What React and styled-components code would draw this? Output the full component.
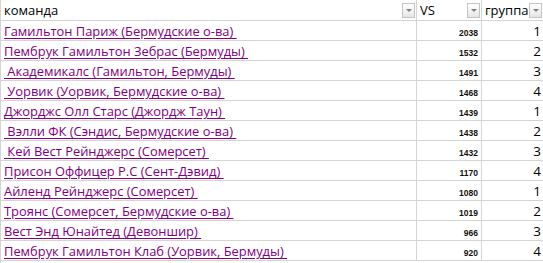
import React from "react";
import styled, { createGlobalStyle } from "styled-components";

const GlobalStyle = createGlobalStyle`
  html, body {
    margin: 0;
    padding: 0;
    background: #ffffff;
  }
  body {
    font-family: "Open Sans", "Liberation Sans", sans-serif;
    overflow: hidden;
  }
`;

const Sheet = styled.div`
  width: 543px;
  height: 263px;
  overflow: hidden;
  border-left: 1px solid #d4d4d4;
  box-sizing: border-box;
`;

const Row = styled.div`
  display: grid;
  grid-template-columns: 416px 65px 61px;
  height: ${(p) => (p.head ? "21px" : "20px")};
  box-sizing: border-box;
  border-bottom: 1px solid #d4d4d4;
`;

const Cell = styled.div`
  display: flex;
  align-items: flex-end;
  justify-content: ${(p) => (p.right ? "flex-end" : "flex-start")};
  padding: 0 2px 0 3px;
  border-right: 1px solid #d4d4d4;
  overflow: hidden;
  white-space: pre;
  font-size: 13px;
  color: #000;

  &:last-child {
    border-right: none;
  }
`;

const HeadCell = styled(Cell)`
  align-items: center;
  justify-content: space-between;
  padding: 0 1px 0 3px;
`;

const TeamLink = styled.a`
  color: #800080;
  text-decoration: underline;
  text-decoration-color: #800080;
  text-underline-offset: 2px;
  white-space: pre;
  font-size: 12.9px;
`;

const Score = styled.span`
  font-family: "Liberation Sans", Arial, sans-serif;
  font-weight: 700;
  font-size: 8.5px;
  color: #111;
  padding: 0 1px 2px 0;
`;

const Group = styled.span`
  font-family: "Open Sans", "Liberation Sans", sans-serif;
  font-size: 13.5px;
`;

const FilterButton = styled.span`
  width: 13px;
  height: 15px;
  box-sizing: border-box;
  border: 1px solid #c4c4c4;
  background: linear-gradient(#ffffff, #e6e6e6);
  display: flex;
  align-items: center;
  justify-content: center;
  flex-shrink: 0;
`;

const Arrow = () => (
  <svg width="6" height="3" viewBox="0 0 6 3">
    <path d="M0 0 H6 L3 3 Z" fill="#808080" />
  </svg>
);

const rows = [
  ["Гамильтон Париж (Бермудские о-ва) ", 2038, 1],
  ["Пембрук Гамильтон Зебрас (Бермуды) ", 1532, 2],
  [" Академикалс (Гамильтон, Бермуды) ", 1491, 3],
  [" Уорвик (Уорвик, Бермудские о-ва) ", 1468, 4],
  ["Джорджс Олл Старс (Джордж Таун) ", 1439, 1],
  [" Вэлли ФК (Сэндис, Бермудские о-ва) ", 1438, 2],
  [" Кей Вест Рейнджерс (Сомерсет) ", 1432, 3],
  ["Присон Оффицер Р.С (Сент-Дэвид) ", 1170, 4],
  ["Айленд Рейнджерс (Сомерсет) ", 1080, 1],
  ["Троянс (Сомерсет, Бермудские о-ва) ", 1019, 2],
  ["Вест Энд Юнайтед (Девоншир) ", 966, 3],
  ["Пембрук Гамильтон Клаб (Уорвик, Бермуды) ", 920, 4],
];

export default function App() {
  return (
    <>
      <GlobalStyle />
      <Sheet>
        <Row head>
          <HeadCell>
            <span>команда</span>
            <FilterButton>
              <Arrow />
            </FilterButton>
          </HeadCell>
          <HeadCell>
            <span>VS</span>
            <FilterButton>
              <Arrow />
            </FilterButton>
          </HeadCell>
          <HeadCell>
            <span>группа</span>
            <FilterButton>
              <Arrow />
            </FilterButton>
          </HeadCell>
        </Row>
        {rows.map(([team, vs, group]) => (
          <Row key={team}>
            <Cell>
              <TeamLink>{team}</TeamLink>
            </Cell>
            <Cell right>
              <Score>{vs}</Score>
            </Cell>
            <Cell right>
              <Group>{group}</Group>
            </Cell>
          </Row>
        ))}
      </Sheet>
    </>
  );
}
